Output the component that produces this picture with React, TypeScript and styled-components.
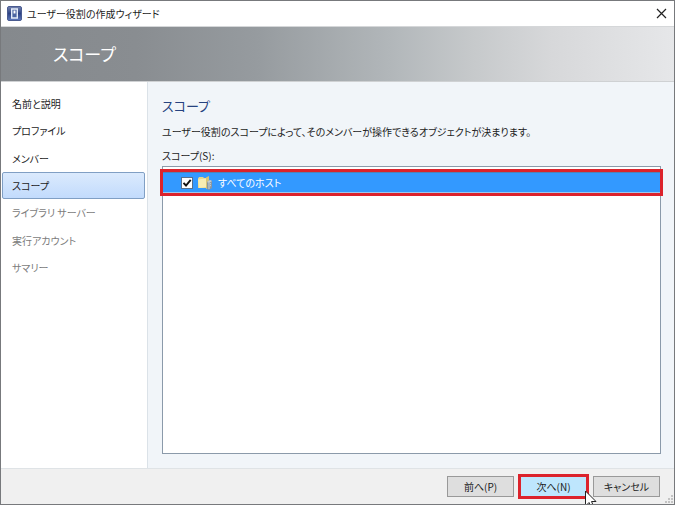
import React, { useState } from "react";
import styled, { createGlobalStyle } from "styled-components";

const GlobalStyle = createGlobalStyle`
  * { box-sizing: border-box; }
  body {
    margin: 0;
    font-family: "Noto Sans CJK JP", sans-serif;
    font-size: 10px;
    line-height: 16px;
    font-feature-settings: "palt";
    color: #1c1c1c;
  }
  button, input { font: inherit; font-feature-settings: inherit; color: inherit; }
`;

const Window = styled.div`
  position: relative;
  display: flex;
  flex-direction: column;
  min-height: 100vh;
  border: 1px solid #77797c;
  background: #f0f0f0;
`;

const TitleBar = styled.header`
  display: flex;
  align-items: center;
  height: 25px;
  padding: 0 7px 0 6px;
  gap: 5px;
  background: #fff;
`;

const Title = styled.span`
  flex: 1;
`;

const CloseButton = styled.button`
  display: flex;
  padding: 0;
  border: 0;
  background: none;
`;

const Banner = styled.div`
  display: flex;
  align-items: center;
  height: 56px;
  padding: 0 52px;
  border-top: 1px solid #d5d7d9;
  border-bottom: 1px solid #cfd1d3;
  background: linear-gradient(90deg, #85898d 0%, #898d91 20%, #969b9f 38%, #b2b7ba 58%, #c6c9cb 70%, #d7d8da 82%, #e6e7e9 100%);
`;

const BannerTitle = styled.h1`
  margin: 0;
  font-size: 17px;
  line-height: 28px;
  font-weight: 400;
  color: #fff;
`;

const Body = styled.div`
  display: flex;
  flex: 1;
`;

const Side = styled.div`
  flex: 0 0 147px;
  border-right: 1px solid #dbe2e8;
  background: #fff;
`;

const Steps = styled.nav`
  display: grid;
  grid-template-rows: repeat(7, 1fr);
  align-items: center;
  height: 192px;
  margin-top: 8px;
  padding: 0 2px 0 1px;
`;

const Step = styled.button<{ $current?: boolean }>`
  height: 27px;
  padding: 0 9px;
  border: 1px solid ${(p) => (p.$current ? "#809fc4" : "transparent")};
  border-radius: 2px;
  background: ${(p) => (p.$current ? "linear-gradient(#dbeafd, #c2dbfc)" : "none")};
  text-align: left;
  &:disabled { color: #7b7b7b; }
`;

const Content = styled.main`
  display: flex;
  flex-direction: column;
  flex: 1;
  padding: 14px 13px 14px 14px;
  background: #f1f5f9;
`;

const Heading = styled.h2`
  margin: 0 0 8px;
  font-size: 13px;
  line-height: 20px;
  font-weight: 400;
  color: #26427f;
`;

const Description = styled.p`
  margin: 0 0 8px;
`;

const ListLabel = styled.span`
  margin-bottom: 2px;
`;

const HostList = styled.div`
  flex: 1;
  padding-top: 5px;
  border: 1px solid #8b9aaa;
  background: #fff;
`;

const HostRow = styled.label`
  display: flex;
  align-items: center;
  height: 21px;
  padding-left: 18px;
  color: #fff;
  background: #3399ff;
  border-top: 1px solid #4f83b8;
  border-bottom: 1px solid #9ec7ee;
  outline: 3px solid #dc232c;
`;

const CheckBox = styled.input`
  appearance: none;
  width: 12px;
  height: 12px;
  margin: 0 4px 0 0;
  border: 1px solid #58708c;
  background: #fff;
  &:checked {
    background: #fff url("data:image/svg+xml,%3Csvg xmlns='http://www.w3.org/2000/svg' viewBox='0 0 10 10'%3E%3Cpath d='M1.5 4.8 4 7.5 8.7 1.8' fill='none' stroke='%23111' stroke-width='1.9'/%3E%3C/svg%3E") center / 10px 10px no-repeat;
  }
`;

const HostName = styled.span`
  margin-left: 5px;
`;

const Footer = styled.footer`
  display: flex;
  justify-content: flex-end;
  gap: 6px;
  height: 36px;
  padding: 7px 14px 0;
  border-top: 1px solid #dfe3e6;
`;

const Command = styled.button<{ $highlighted?: boolean }>`
  width: 67px;
  height: 21px;
  padding: 0;
  border: 1px solid ${(p) => (p.$highlighted ? "#a6d3ea" : "#999")};
  background: ${(p) => (p.$highlighted ? "#bee6fd" : "#dedede")};
  outline: ${(p) => (p.$highlighted ? "3px solid #dc232c" : "none")};
  outline-offset: -1px;
`;

const Pointer = styled.svg`
  position: absolute;
  right: 77px;
  bottom: 0;
`;

const Grip = styled.svg`
  position: absolute;
  right: 1px;
  bottom: 1px;
`;

const AppIcon = () => (
  <svg width="15" height="15" viewBox="0 0 15 15" aria-hidden="true">
    <defs>
      <linearGradient id="tile" x2="0" y2="1">
        <stop stopColor="#7484b0" />
        <stop offset="0.5" stopColor="#2d4284" />
        <stop offset="1" stopColor="#5d79bd" />
      </linearGradient>
    </defs>
    <rect x="0.5" y="0.5" width="14" height="14" rx="1.5" fill="url(#tile)" stroke="#4a5b90" />
    <path d="M4.7 3h5.6v9H4.7z" fill="#4c66a2" stroke="#e5edf9" strokeWidth="1.4" />
    <path d="M6.5 4.5h2v3h-2z" fill="#fff" />
  </svg>
);

const HostIcon = () => (
  <svg width="16" height="16" viewBox="0 0 16 16" aria-hidden="true">
    <path d="M1 3.5 2 2h4l1 1h5v10H1z" fill="#e8d68b" />
    <path d="M1 4.5 9 3.5 11 5v7L2 13z" fill="#f8edb3" />
    <path d="M9 2.5 12 1v12l-3 1z" fill="#d8c477" />
    <path d="m10 7 3-2 2 1v7l-3 2-2-1z" fill="#8996a1" />
    <path d="m10 7 3-2 2 1-3 2z" fill="#c7d0d5" />
    <path d="M12 8v6M13 9l1-.6M13 11l1-.6" stroke="#dce3e6" strokeWidth="0.8" />
  </svg>
);

const steps = [
  { name: "名前と説明" },
  { name: "プロファイル" },
  { name: "メンバー" },
  { name: "スコープ", current: true },
  { name: "ライブラリ サーバー", disabled: true },
  { name: "実行アカウント", disabled: true },
  { name: "サマリー", disabled: true },
];

export default function App() {
  const [checked, setChecked] = useState(true);
  return (
    <>
      <GlobalStyle />
      <Window>
        <TitleBar>
          <AppIcon />
          <Title>ユーザー役割の作成ウィザード</Title>
          <CloseButton aria-label="閉じる">
            <svg width="11" height="11" viewBox="0 0 11 11">
              <path d="m1 1 9 9m0-9-9 9" stroke="#222" strokeWidth="1.2" />
            </svg>
          </CloseButton>
        </TitleBar>
        <Banner>
          <BannerTitle>スコープ</BannerTitle>
        </Banner>
        <Body>
          <Side>
            <Steps>
              {steps.map((s) => (
                <Step
                  key={s.name}
                  $current={s.current}
                  disabled={s.disabled}
                  aria-current={s.current ? "step" : undefined}
                >
                  {s.name}
                </Step>
              ))}
            </Steps>
          </Side>
          <Content>
            <Heading>スコープ</Heading>
            <Description>
              ユーザー役割のスコープによって、そのメンバーが操作できるオブジェクトが決まります。
            </Description>
            <ListLabel id="scope-label">スコープ(S):</ListLabel>
            <HostList role="group" aria-labelledby="scope-label">
              <HostRow>
                <CheckBox
                  type="checkbox"
                  checked={checked}
                  onChange={(e) => setChecked(e.target.checked)}
                />
                <HostIcon />
                <HostName>すべてのホスト</HostName>
              </HostRow>
            </HostList>
          </Content>
        </Body>
        <Footer>
          <Command>前へ(P)</Command>
          <Command $highlighted>次へ(N)</Command>
          <Command>キャンセル</Command>
        </Footer>
        <Grip width="9" height="9" viewBox="0 0 9 9" aria-hidden="true">
          <path d="M7 1h2v2H7zM4 4h2v2H4zM7 4h2v2H7zM1 7h2v2H1zM4 7h2v2H4zM7 7h2v2H7z" fill="#c3c3c3" />
        </Grip>
        <Pointer width="13" height="14" viewBox="0 0 13 14" aria-hidden="true">
          <path d="M1.5 1v15l3.5-3.5L7 17l2.5-1-2-4.5H12z" fill="#fff" stroke="#222" />
        </Pointer>
      </Window>
    </>
  );
}
